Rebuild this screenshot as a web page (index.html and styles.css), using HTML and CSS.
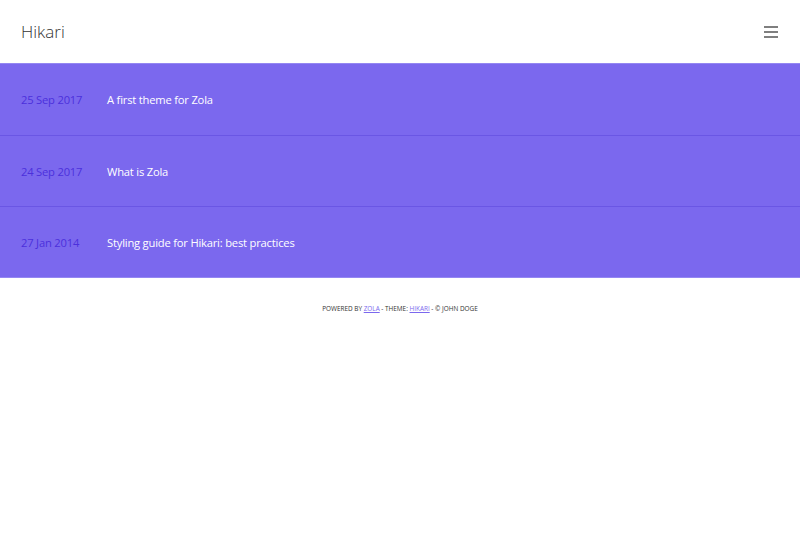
FILE: index.html
```html
<!DOCTYPE html>
<html lang="en">
<head>
  <meta charset="UTF-8">
  <title>Hikari</title>
  <link rel="stylesheet" href="styles.css">
</head>
<body>
  <header class="site-header">
    <a class="brand" href="#">Hikari</a>
    <button class="menu-toggle" aria-label="Menu">
      <svg width="14" height="12" viewBox="0 0 14 12">
        <path d="M0 1h14M0 6h14M0 11h14" stroke="#555" stroke-width="1.3"/>
      </svg>
    </button>
  </header>

  <main class="posts">
    <a class="post" href="#">
      <span class="post-date">25 Sep 2017</span>
      <span class="post-title">A first theme for Zola</span>
    </a>
    <a class="post" href="#">
      <span class="post-date">24 Sep 2017</span>
      <span class="post-title">What is Zola</span>
    </a>
    <a class="post" href="#">
      <span class="post-date">27 Jan 2014</span>
      <span class="post-title">Styling guide for Hikari: best practices</span>
    </a>
  </main>

  <footer class="site-footer">
    Powered by <a href="#">Zola</a> - Theme: <a href="#">Hikari</a> - &copy; John Doge
  </footer>
</body>
</html>
```

FILE: styles.css
```css
body {
  margin: 0;
  font-family: "Open Sans", sans-serif;
  background: #fff;
  color: #333;
}
.site-header {
  box-sizing: border-box;
  height: 64px;
  display: flex;
  align-items: center;
  justify-content: space-between;
  padding: 0 21px;
  border-bottom: 1px solid #9487f2;
}
.brand {
  font-size: 17px;
  font-weight: 300;
  color: #333;
  text-decoration: none;
}
.menu-toggle {
  background: none;
  border: none;
  padding: 0;
  margin-right: 1px;
  display: flex;
  cursor: pointer;
}
.posts {
  background: #7b68ee;
  border-bottom: 1px solid #9487f2;
}
.post {
  height: 70px;
  display: flex;
  align-items: center;
  padding: 0 21px;
  font-size: 11.2px;
  letter-spacing: -0.2px;
  text-decoration: none;
  border-top: 1px solid #6a56e4;
}
.post:first-child {
  border-top: none;
  height: 71px;
}
.post-date {
  width: 86px;
  color: #4b30dc;
}
.post-title {
  color: #fff;
}
.site-footer {
  text-align: center;
  font-size: 6.4px;
  text-transform: uppercase;
  color: #333;
  padding: 26px 0;
}
.site-footer a {
  color: #7b68ee;
}
```
